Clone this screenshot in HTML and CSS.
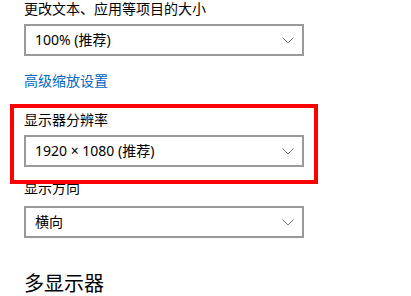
FILE: index.html
```html
<!DOCTYPE html>
<html lang="zh-CN">
<head>
<meta charset="utf-8">
<title>显示设置</title>
<link rel="stylesheet" href="styles.css">
</head>
<body>
<main class="page">
  <section class="group group-first">
    <div class="label">更改文本、应用等项目的大小</div>
    <div class="select">
      <span class="value">100% (推荐)</span>
      <svg class="chev" width="12" height="7" viewBox="0 0 12 7"><polyline points="0.5,0.5 6,6 11.5,0.5" fill="none" stroke="#7a7a7a" stroke-width="1"/></svg>
    </div>
  </section>
  <a class="link" href="#">高级缩放设置</a>
  <section class="group group-res">
    <div class="label">显示器分辨率</div>
    <div class="select">
      <span class="value">1920 × 1080 (推荐)</span>
      <svg class="chev" width="12" height="7" viewBox="0 0 12 7"><polyline points="0.5,0.5 6,6 11.5,0.5" fill="none" stroke="#7a7a7a" stroke-width="1"/></svg>
    </div>
  </section>
  <section class="group group-orient">
    <div class="label">显示方向</div>
    <div class="select">
      <span class="value">横向</span>
      <svg class="chev" width="12" height="7" viewBox="0 0 12 7"><polyline points="0.5,0.5 6,6 11.5,0.5" fill="none" stroke="#7a7a7a" stroke-width="1"/></svg>
    </div>
  </section>
  <h2 class="heading">多显示器</h2>
  <div class="highlight"></div>
</main>
</body>
</html>
```
FILE: styles.css
```css
html, body {
  margin: 0;
  padding: 0;
  background: #ffffff;
}
body {
  font-family: "Noto Sans", "Noto Sans CJK SC", sans-serif;
  color: #000000;
  font-size: 14px;
  overflow: hidden;
}
.page {
  position: relative;
  width: 411px;
  height: 296px;
  padding-left: 24px;
  box-sizing: border-box;
}
.group {
  display: flex;
  flex-direction: column;
  gap: 6px;
}
.group-first {
  padding-top: 0;
}
.group-res {
  margin-top: 21px;
}
.group-orient {
  margin-top: 12px;
  gap: 9px;
}
.label {
  height: 18px;
  line-height: 18px;
  white-space: nowrap;
}
.select {
  box-sizing: border-box;
  width: 280px;
  height: 32px;
  border: 2px solid #999999;
  display: flex;
  align-items: center;
  justify-content: space-between;
  padding: 0 8px 0 9px;
}
.value {
  line-height: 18px;
  white-space: nowrap;
}
.chev {
  display: block;
}
.link {
  display: block;
  margin-top: 16px;
  height: 18px;
  line-height: 18px;
  color: #0067c0;
  text-decoration: none;
  width: max-content;
}
.heading {
  margin: 32px 0 0 0;
  font-size: 20px;
  font-weight: 400;
  line-height: 28px;
}
.highlight {
  position: absolute;
  left: 10px;
  top: 104px;
  width: 308px;
  height: 80px;
  box-sizing: border-box;
  border: 4px solid #ff0000;
}
```
